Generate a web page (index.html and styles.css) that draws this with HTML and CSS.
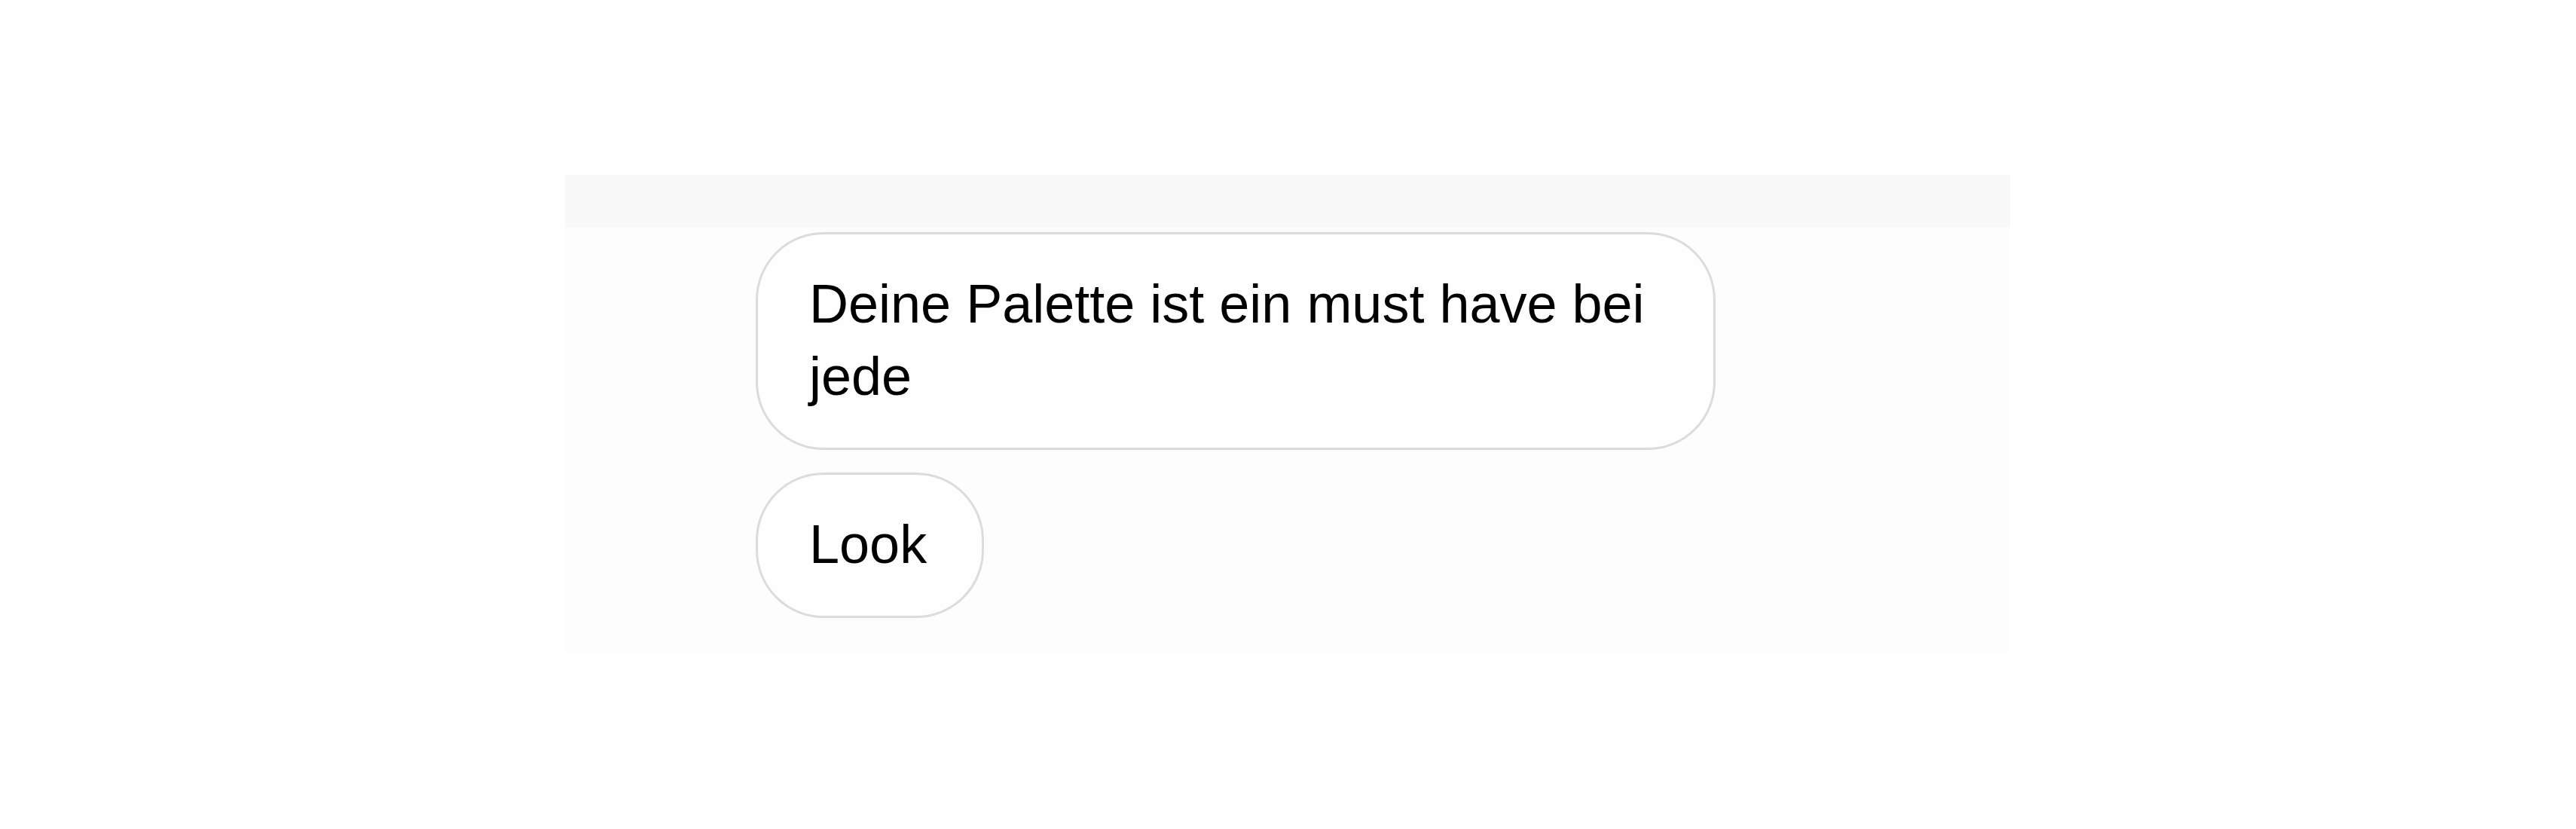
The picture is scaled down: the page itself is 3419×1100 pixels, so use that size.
FILE: index.html
```html
<!DOCTYPE html>
<html lang="de">
<head>
<meta charset="utf-8">
<title>Chat</title>
<link rel="stylesheet" href="styles.css">
</head>
<body>
<div class="panel">
  <div class="strip"></div>
  <div class="messages">
    <div class="bubble bubble-wide">Deine Palette ist ein must have bei jede</div>
    <div class="bubble">Look</div>
  </div>
</div>
</body>
</html>
```
FILE: styles.css
```css
html, body {
  margin: 0;
  padding: 0;
  background: #ffffff;
}
body {
  width: 3419px;
  height: 1100px;
  font-family: "Liberation Sans", Arial, sans-serif;
}
.panel {
  margin-left: 750px;
  margin-top: 232px;
  width: 1918px;
  height: 635px;
  background: #fdfdfd;
  display: flex;
  flex-direction: column;
}
.strip {
  height: 70px;
  background: #f9f9f9;
}
.messages {
  display: flex;
  flex-direction: column;
  align-items: flex-start;
  gap: 30px;
  padding-top: 6px;
  padding-left: 253px;
}
.bubble {
  box-sizing: border-box;
  border: 3px solid #dcdcdc;
  border-radius: 90px;
  background: #fefefe;
  padding: 44px 73px 47px 68px;
  font-size: 72px;
  line-height: 96px;
  color: #000000;
}
.bubble-wide {
  width: 1274px;
}
```
